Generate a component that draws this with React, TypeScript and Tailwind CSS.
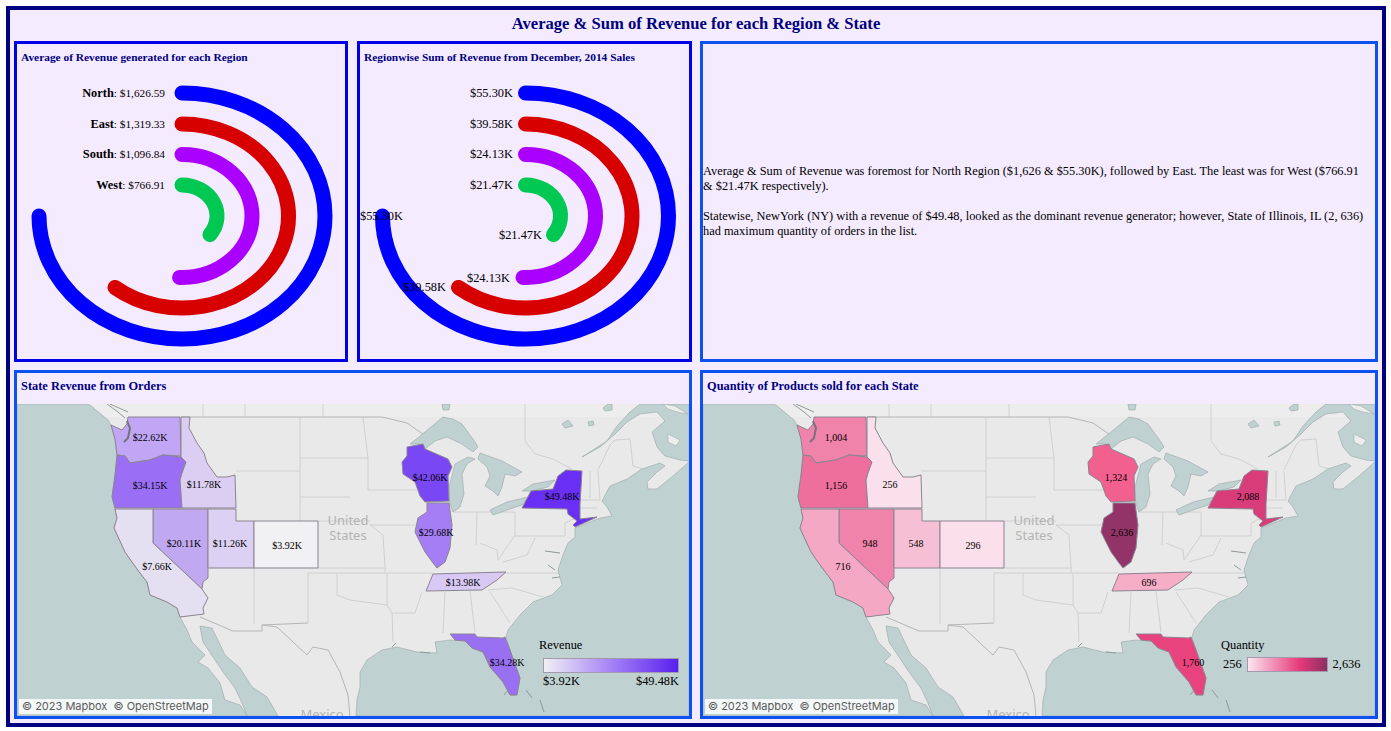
import React from "react";

const arcColors = ["#0000ff", "#d60000", "#aa00ff", "#00c853"];
const radii = [
  { rx: 143, ry: 123, deg: 270 },
  { rx: 106.5, ry: 92, deg: 219 },
  { rx: 70, ry: 61.5, deg: 182 },
  { rx: 35, ry: 31, deg: 127 },
];

function arcPath(cx: number, cy: number, rx: number, ry: number, deg: number) {
  const a = (deg * Math.PI) / 180;
  const x = cx + rx * Math.sin(a);
  const y = cy - ry * Math.cos(a);
  return `M ${cx} ${cy - ry} A ${rx} ${ry} 0 ${deg > 180 ? 1 : 0} 1 ${x} ${y}`;
}

function Arcs({ cx }: { cx: number }) {
  return (
    <>
      {radii.map((r, i) => (
        <path
          key={i}
          d={arcPath(cx, 216, r.rx, r.ry, r.deg)}
          fill="none"
          stroke={arcColors[i]}
          strokeWidth={15}
          strokeLinecap="round"
        />
      ))}
    </>
  );
}

function AverageChart() {
  const rows = [
    { name: "North", value: "$1,626.59", y: 96.5 },
    { name: "East", value: "$1,319.33", y: 128 },
    { name: "South", value: "$1,096.84", y: 158 },
    { name: "West", value: "$766.91", y: 188.5 },
  ];
  return (
    <svg viewBox="17 74 328 285" className="w-[328px] h-[285px]">
      <Arcs cx={182} />
      {rows.map((r) => (
        <text key={r.name} x={165} y={r.y} textAnchor="end" className="text-[11.3px]" fill="#000">
          <tspan className="font-bold text-[12.4px]">{r.name}</tspan>: {r.value}
        </text>
      ))}
    </svg>
  );
}

function SumChart() {
  const labels = [
    { t: "$55.30K", x: 513, y: 97 },
    { t: "$39.58K", x: 513, y: 128 },
    { t: "$24.13K", x: 513, y: 158 },
    { t: "$21.47K", x: 513, y: 189 },
    { t: "$55.30K", x: 403, y: 220 },
    { t: "$39.58K", x: 446, y: 291 },
    { t: "$24.13K", x: 510, y: 282 },
    { t: "$21.47K", x: 542, y: 239 },
  ];
  return (
    <svg viewBox="360 74 329 285" className="w-[329px] h-[285px] overflow-visible">
      <Arcs cx={525.5} />
      {labels.map((l, i) => (
        <text key={i} x={l.x} y={l.y} textAnchor="end" className="text-[12.4px]" fill="#000">
          {l.t}
        </text>
      ))}
    </svg>
  );
}

const WATER = "#bfd1d1";
const COAST = "#9aa5a5";

const statePoints: Record<string, string> = {
  WA: "128,417 180,417 181,456 163,455 150,460 130,463 125,456 117,455 115,439 111,425 122,430 127,424",
  OR: "117,455 125,456 130,463 150,460 163,455 181,457 186,462 182,473 180,480 182,508 115,508 112,497 115,475",
  ID: "181,417 190,417 189,428 197,443 204,453 207,463 217,477 227,477 235,475 236,508 182,508 180,480 182,473 186,462 181,457",
  NV: "153,509 208,509 208,578 203,582 202,589 153,543",
  UT: "208,509 236,509 236,521 254,521 254,568 208,568",
  CO: "254,521 318,521 318,568 254,568",
  CA: "115,509 153,509 153,543 202,589 208,598 203,608 204,614 180,617 177,608 167,602 150,595 147,582 140,573 132,562 125,552 114,528 117,518",
  WI: "407,447 423,444 425,449 448,459 452,467 448,476 449,501 425,502 420,496 415,482 403,474 402,462 407,456",
  IL: "427,503 449,503 452,525 450,548 445,562 437,568 433,563 425,552 415,532 418,518 427,512",
  TN: "433,574 506,572 497,580 482,590 426,591",
  NY: "522,508 531,491 553,489 558,476 566,470 582,471 580,504 580,519 597,517 575,527 573,525 577,521 568,514 567,509",
  FL: "450,634 475,634 477,637 503,638 505,637 510,650 520,678 517,695 510,695 503,682 490,667 483,652 472,648 465,641 455,640",
};

const labelSpots: Record<string, [number, number]> = {
  WA: [150, 437],
  OR: [150, 485],
  ID: [204, 484],
  NV: [184, 543],
  UT: [230, 543],
  CO: [287, 545],
  CA: [157, 566],
  WI: [430, 477],
  IL: [436, 532],
  TN: [463, 582],
  NY: [562, 496],
  FL: [507, 662],
};

const waterShapes = [
  // pacific
  "17,404 85,404 90,405 108,420 111,425 115,439 117,455 115,475 112,497 115,509 117,518 114,528 125,552 132,562 140,573 147,582 150,595 167,602 177,608 180,617 187,630 192,642 205,655 198,662 208,668 220,683 225,700 240,705 247,716 17,716",
  // gulf of california
  "200,626 212,628 225,655 240,668 252,687 267,697 278,716 247,716 242,703 235,688 223,672 213,657 203,642 201,632",
  // atlantic and gulf
  "689,462 673,476 657,489 648,489 647,482 657,472 665,466 660,463 642,469 627,479 610,486 602,501 607,507 612,516 600,518 595,520 575,528 575,537 568,543 563,555 558,570 562,585 552,595 533,602 520,615 508,630 506,637 510,650 520,678 517,695 510,695 503,682 490,667 483,652 472,648 465,641 450,640 435,642 437,653 417,652 397,647 382,650 367,660 360,672 360,687 357,700 356,716 689,716",
  // st lawrence
  "640,404 689,404 689,461 680,460 665,456 657,447 652,432 665,421 657,412 640,414 627,422 615,434 600,447 582,457 607,441 617,426 630,412",
  // superior
  "410,444 425,432 443,417 453,419 462,424 475,442 478,447 473,452 462,444 447,437 435,441 425,449 420,444",
  // michigan
  "455,464 468,457 475,459 467,464 462,474 464,494 460,507 453,512 449,501 449,487 453,472",
  // huron
  "480,453 502,461 522,472 515,476 505,474 502,487 498,496 493,491 485,486 490,476 487,467 478,459",
  // erie
  "490,510 507,502 528,497 522,505 507,510 493,515",
  // ontario
  "522,491 533,484 555,480 548,487 532,491",
  // small lakes
  "442,404 450,404 449,410 443,410",
  "562,424 568,420 573,426 565,428",
  "588,422 593,421 594,425 589,426",
  "603,408 608,404 612,404 612,410 605,411",
];

const landPatches = ["663,404 675,406 688,414 677,412 668,409", "668,434 680,440 676,446 668,442"];

const stateLines = [
  "M245 404V417 M323 404V417 M203 404V417 M300 417V497 M300 458H368 M236 471H300 M300 497H350 M300 497V521 M318 521H370 M318 568H386",
  "M363 417L368 458V490 M368 490H417 M370 525H418 M370 525L383 535L385 567V573 M308 573H433 M308 573V623 M254 568V624 M337 573V595L350 600L387 605V573",
  "M387 605L392 613H415L422 592 M392 613L393 642 M445 592L443 633 M470 591L475 632 M490 592L510 623 M505 573H573 M488 590L512 588L543 597",
  "M453 512H477L476 545 M477 512H515V536H565 M480 543L497 550L498 560L515 535 M503 562L527 555L535 538 M565 536V523L575 518 M580 500H600 M580 508H597 M590 471V498 M598 471L600 500",
  "M525 404V441L535 454L553 459L572 469 M598 470L610 445L615 440L630 439L633 466L643 469",
];

const darkLines = [
  "M181 417H382L407 423L427 437",
  "M200 617L233 631H262V625L308 623 M262 625L277 627L293 642L307 655L313 647L328 650L340 672L348 695L350 716",
];

// bays and sounds along the coast, drawn darker than the state lines
const coastMarks = [
  "M545 551L560 553 M548 565L555 570 M552 578L560 577 M107 404L118 412L125 418 M110 404L128 412",
  "M392 647L396 643 M420 652L430 653 M510 688L504 695 M526 690L532 698 M540 700L544 712",
];

function StateMap({
  fills,
  labels,
  children,
}: {
  fills: Record<string, string>;
  labels: Record<string, string>;
  children: React.ReactNode;
}) {
  return (
    <div className="relative w-[672px] h-[312px] overflow-hidden">
      <svg viewBox="17 404 672 312" className="w-[672px] h-[312px]">
        <rect x="17" y="404" width="672" height="312" fill="#e9e9e9" />
        <rect x="17" y="404" width="672" height="13" fill="#ededed" />
        {stateLines.map((d, i) => (
          <path key={i} d={d} fill="none" stroke="#d0d0d0" strokeWidth={1} />
        ))}
        {darkLines.map((d, i) => (
          <path key={i} d={d} fill="none" stroke="#b6b6b6" strokeWidth={1} />
        ))}
        {waterShapes.map((p, i) => (
          <polygon key={i} points={p} fill={WATER} stroke={COAST} strokeWidth={0.6} />
        ))}
        {landPatches.map((p, i) => (
          <polygon key={i} points={p} fill="#ededed" stroke={COAST} strokeWidth={0.5} />
        ))}
        {coastMarks.map((d, i) => (
          <path key={i} d={d} fill="none" stroke="#8f9a9a" strokeWidth={1} />
        ))}
        <text x={348} y={525} textAnchor="middle" fill="#b4b4b4" className="text-[13px] font-['Noto_Sans',sans-serif]">
          United
        </text>
        <text x={348} y={540} textAnchor="middle" fill="#b4b4b4" className="text-[13px] font-['Noto_Sans',sans-serif]">
          States
        </text>
        <text x={322} y={719} textAnchor="middle" fill="#b4b4b4" className="text-[13px] font-['Noto_Sans',sans-serif]">
          Mexico
        </text>
        {Object.keys(statePoints).map((k) => (
          <polygon key={k} points={statePoints[k]} fill={fills[k]} stroke="#8b8491" strokeWidth={1} />
        ))}
        <path d="M127 421L130 428L128 438L124 442" fill="none" stroke="#77737c" strokeWidth={2} />
        {Object.keys(labelSpots).map((k) => (
          <text
            key={k}
            x={labelSpots[k][0]}
            y={labelSpots[k][1] + 3.5}
            textAnchor="middle"
            fill="#000"
            className="text-[10px]"
          >
            {labels[k]}
          </text>
        ))}
      </svg>
      <div className="absolute left-[2px] bottom-[2px] h-[15px] w-[193px] bg-white/85 pl-[3px] text-[11px] leading-[15px] text-[#5a5a5a] whitespace-pre font-['Inter',sans-serif]">
        © 2023 Mapbox  © OpenStreetMap
      </div>
      {children}
    </div>
  );
}

const revenueFills = {
  WA: "#c0a6f5",
  OR: "#9b6ff5",
  ID: "#dccdf3",
  NV: "#c1a9f1",
  UT: "#dcd0f3",
  CO: "#f1f0f3",
  CA: "#e5dff2",
  WI: "#7a47f5",
  IL: "#a57ef6",
  TN: "#d8c8f4",
  NY: "#6a2ff5",
  FL: "#9a70f3",
};

const revenueLabels = {
  WA: "$22.62K",
  OR: "$34.15K",
  ID: "$11.78K",
  NV: "$20.11K",
  UT: "$11.26K",
  CO: "$3.92K",
  CA: "$7.66K",
  WI: "$42.06K",
  IL: "$29.68K",
  TN: "$13.98K",
  NY: "$49.48K",
  FL: "$34.28K",
};

const quantityFills = {
  WA: "#f083a9",
  OR: "#ee6f9c",
  ID: "#f9e0ea",
  NV: "#f083a9",
  UT: "#f7bfd4",
  CO: "#fbdfea",
  CA: "#f4a8c4",
  WI: "#f1608f",
  IL: "#933468",
  TN: "#f6adc6",
  NY: "#d83d7a",
  FL: "#e9437e",
};

const quantityLabels = {
  WA: "1,004",
  OR: "1,156",
  ID: "256",
  NV: "948",
  UT: "548",
  CO: "296",
  CA: "716",
  WI: "1,324",
  IL: "2,636",
  TN: "696",
  NY: "2,088",
  FL: "1,760",
};

function CardTitle({ children }: { children: React.ReactNode }) {
  return (
    <div className="h-[27px] mb-[3px] pl-1 flex items-center text-[11.4px] font-bold text-[#000080]">{children}</div>
  );
}

export default function App() {
  return (
    <div className="h-[731px] bg-white pl-[6px] pt-[6px] font-['Liberation_Serif',serif] overflow-hidden">
      <div className="w-[1380px] h-[721px] border-4 border-[#000080] bg-[#f5ebff] px-1">
        <div className="h-[28px] mb-[3px] flex items-center justify-center text-[16.6px] font-bold text-[#000080]">
          Average & Sum of Revenue for each Region & State
        </div>
        <div className="flex h-[321px]">
          <div className="w-[334px] border-[3px] border-[#0000e6]">
            <CardTitle>Average of Revenue generated for each Region</CardTitle>
            <AverageChart />
          </div>
          <div className="ml-[9px] w-[335px] border-[3px] border-[#0000e6]">
            <CardTitle>Regionwise Sum of Revenue from December, 2014 Sales</CardTitle>
            <SumChart />
          </div>
          <div className="ml-2 w-[678px] border-[3px] border-[#0d52f0] flex items-center pr-[6px] text-[12.36px] leading-[15px] text-black">
            <div>
              <p>
                Average & Sum of Revenue was foremost for North Region ($1,626 & $55.30K), followed by East. The least
                was for West ($766.91 & $21.47K respectively).
              </p>
              <p className="mt-[15px]">
                Statewise, NewYork (NY) with a revenue of $49.48, looked as the dominant revenue generator; however,
                State of Illinois, IL (2, 636) had maximum quantity of orders in the list.
              </p>
            </div>
          </div>
        </div>
        <div className="flex gap-2 mt-2 h-[349px]">
          <div className="w-[678px] border-[3px] border-[#0d52f0]">
            <div className="h-[27px] mb-1 pl-1 flex items-center text-[12.4px] font-bold text-[#000080]">
              State Revenue from Orders
            </div>
            <StateMap fills={revenueFills} labels={revenueLabels}>
              <div className="absolute left-[522px] top-[232px] text-[12.4px] text-black">Revenue</div>
              <div className="absolute left-[526px] top-[254px] w-[136px] h-[15px] border border-[#a49aae] bg-[linear-gradient(to_right,#f1eff5,#a583f5_50%,#5a1ff0)]" />
              <div className="absolute left-[526px] top-[268px] w-[136px] flex justify-between text-[12.4px] text-black">
                <span>$3.92K</span>
                <span>$49.48K</span>
              </div>
            </StateMap>
          </div>
          <div className="w-[678px] border-[3px] border-[#0d52f0]">
            <div className="h-[27px] mb-1 pl-1 flex items-center text-[12.4px] font-bold text-[#000080]">
              Quantity of Products sold for each State
            </div>
            <StateMap fills={quantityFills} labels={quantityLabels}>
              <div className="absolute left-[518px] top-[232px] text-[12.4px] text-black">Quantity</div>
              <div className="absolute left-[520px] top-[251px] flex items-center gap-[5px] text-[12.4px] text-black">
                <span>256</span>
                <div className="w-[81px] h-[15px] border border-[#a49aae] bg-[linear-gradient(to_right,#fbe6ef,#e63a7a_65%,#8e2f62)]" />
                <span>2,636</span>
              </div>
            </StateMap>
          </div>
        </div>
      </div>
    </div>
  );
}
